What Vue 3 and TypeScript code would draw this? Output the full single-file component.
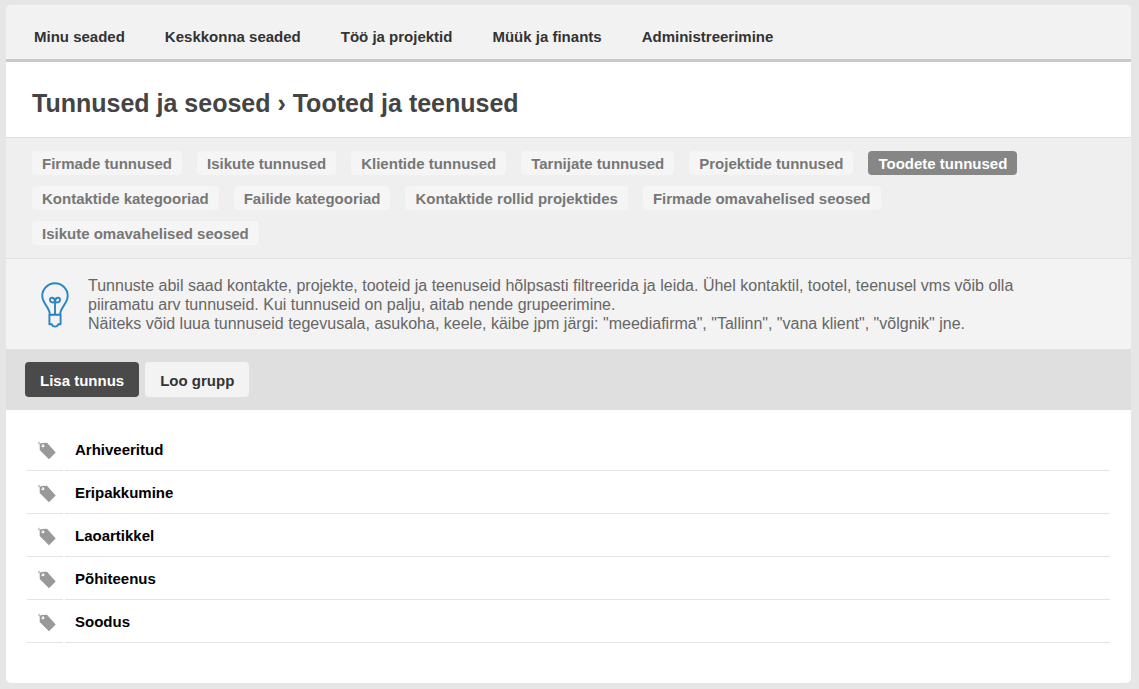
<script setup lang="ts">
import { ref } from 'vue'

const menu: string[] = ['Minu seaded', 'Keskkonna seaded', 'Töö ja projektid', 'Müük ja finants', 'Administreerimine']

const tabs: string[] = [
  'Firmade tunnused',
  'Isikute tunnused',
  'Klientide tunnused',
  'Tarnijate tunnused',
  'Projektide tunnused',
  'Toodete tunnused',
  'Kontaktide kategooriad',
  'Failide kategooriad',
  'Kontaktide rollid projektides',
  'Firmade omavahelised seosed',
  'Isikute omavahelised seosed',
]
const activeTab = ref<string>('Toodete tunnused')

const tags: string[] = ['Arhiveeritud', 'Eripakkumine', 'Laoartikkel', 'Põhiteenus', 'Soodus']
</script>

<template>
  <div class="panel">
    <nav class="menu">
      <a v-for="item in menu" :key="item" href="#">{{ item }}</a>
    </nav>

    <header class="heading">
      <h1>Tunnused ja seosed › Tooted ja teenused</h1>
    </header>

    <nav class="tabs">
      <a
        v-for="tab in tabs"
        :key="tab"
        href="#"
        class="tab"
        :class="{ active: tab === activeTab }"
        @click.prevent="activeTab = tab"
      >{{ tab }}</a>
    </nav>

    <section class="hint">
      <svg class="bulb" width="28" height="46" viewBox="0 0 28 46" fill="none" stroke="#2a85c0" stroke-width="1.9" stroke-linejoin="round" stroke-linecap="round" aria-hidden="true">
        <path d="M8.800 32.500C8.600 24.500 1.300 22 1.300 13.800A12.700 12.500 0 0 1 26.700 13.800C26.700 22 19.400 24.500 19.200 32.500" />
        <path d="M8.400 32.700H19.600V42.300H17.200C16.800 43.800 15.500 44.600 14 44.600C12.500 44.600 11.200 43.800 10.800 42.300H8.400Z" />
        <path d="M14 32V19.200M14 19.200C13 21 9 21 9 17.800C9 14.600 13.400 15.200 14 19.200C14.600 15.200 19 14.600 19 17.800C19 21 15 21 14 19.200" />
      </svg>
      <p>
        Tunnuste abil saad kontakte, projekte, tooteid ja teenuseid hõlpsasti filtreerida ja leida. Ühel kontaktil, tootel, teenusel vms võib olla piiramatu arv tunnuseid. Kui tunnuseid on palju, aitab nende grupeerimine.<br />
        Näiteks võid luua tunnuseid tegevusala, asukoha, keele, käibe jpm järgi: "meediafirma", "Tallinn", "vana klient", "võlgnik" jne.
      </p>
    </section>

    <div class="toolbar">
      <button type="button" class="primary">Lisa tunnus</button>
      <button type="button">Loo grupp</button>
    </div>

    <ul class="list">
      <li v-for="tag in tags" :key="tag">
        <span class="icon">
          <svg width="18" height="19" viewBox="0 0 18 19" aria-hidden="true">
            <path fill="#999" fill-rule="evenodd" d="M3 1.900L9 1.700L17.700 11.400L11 18.300L1.700 8.900V3.500ZM4.900 3.200A1.500 1.500 0 1 0 4.900 6.200A1.500 1.500 0 1 0 4.900 3.200Z" />
            <path fill="none" stroke="#999" stroke-width="0.900" d="M4.600 4.600L0.600 2.400L1.200 0.800" />
          </svg>
        </span>
        <a href="#" class="name">{{ tag }}</a>
      </li>
    </ul>
  </div>
</template>

<style>
body {
  background: #e6e6e6;
}
</style>

<style scoped>
.panel {
  margin: 5px 8px 6px 6px;
  background: #fff;
  border-radius: 5px;
  overflow: hidden;
  font-family: "Liberation Sans", Arial, sans-serif;
  font-size: 15px;
  color: #333;
}

a {
  color: inherit;
  text-decoration: none;
}

.menu {
  display: flex;
  flex-wrap: wrap;
  column-gap: 40px;
  padding: 22px 28px 12px;
  background: #f2f2f2;
  border-bottom: 3px solid #c8c8c8;
  font-weight: bold;
  line-height: 20px;
}

.heading {
  padding: 26px 26px 19px;
  border-bottom: 1px solid #dcdcdc;
}

h1 {
  margin: 0;
  font-size: 25px;
  line-height: 30px;
  font-weight: bold;
  color: #444;
}

.tabs {
  display: flex;
  flex-wrap: wrap;
  gap: 11px 15px;
  padding: 13px 100px 13px 26px;
  background: #efefef;
  border-bottom: 1px solid #dfdfdf;
}

.tab {
  padding: 2px 10px 0;
  border-radius: 4px;
  background: #f5f5f5;
  color: #777;
  font-weight: bold;
  line-height: 22px;
}

.tab.active {
  background: #868686;
  color: #fff;
}

.hint {
  display: flex;
  gap: 19px;
  padding: 17px 100px 16px 35px;
  background: #f3f3f3;
  color: #666;
  font-size: 16px;
  line-height: 19px;
}

.hint p {
  margin: 0;
}

.bulb {
  flex: none;
  margin-top: 6px;
}

.toolbar {
  display: flex;
  gap: 6px;
  padding: 13px 19px;
  background: #dfdfdf;
}

button {
  padding: 2px 15px 0;
  border: 0;
  border-radius: 4px;
  background: #f3f3f3;
  color: #333;
  font: bold 15px/33px "Liberation Sans", Arial, sans-serif;
}

button.primary {
  background: #4a4a4a;
  color: #fff;
}

.list {
  margin: 0;
  padding: 18px 21px 40px;
  list-style: none;
}

.list li {
  display: grid;
  grid-template-columns: 36px 1fr;
  column-gap: 2px;
  line-height: 40px;
}

.icon,
.name {
  padding-top: 2px;
  border-bottom: 1px solid #e4e4e4;
}

.icon {
  display: flex;
  align-items: center;
  padding-left: 11px;
}

.name {
  padding-left: 10px;
  color: #000;
  font-weight: bold;
}
</style>
